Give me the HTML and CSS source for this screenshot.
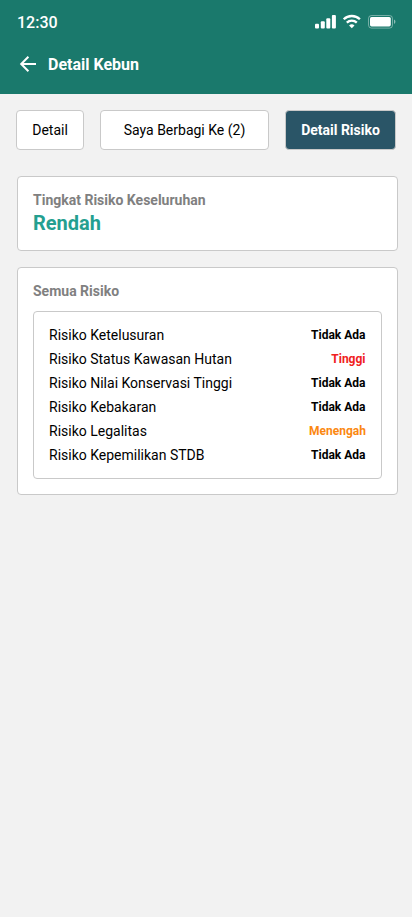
FILE: index.html
```html
<!DOCTYPE html>
<html lang="id">
<head>
<meta charset="utf-8">
<meta name="viewport" content="width=device-width, initial-scale=1">
<title>Detail Kebun</title>
<link rel="stylesheet" href="styles.css">
</head>
<body>
<header class="header">
  <div class="status-bar">
    <time class="clock">12:30</time>
    <svg class="status-icons" width="82" height="16" viewBox="0 0 82 16" fill="#fff" aria-hidden="true">
      <rect x="1" y="9.8" width="4" height="4.8" rx="1"/>
      <rect x="6.8" y="7.2" width="4" height="7.4" rx="1"/>
      <rect x="12.3" y="4.2" width="4" height="10.4" rx="1"/>
      <rect x="17.9" y="1" width="4" height="13.6" rx="1"/>
      <g fill="none" stroke="#fff" stroke-width="2.3">
        <path d="M29.7 5.3a11.6 11.6 0 0 1 16.2 0"/>
        <path d="M32.8 8.7a7.2 7.2 0 0 1 10 0"/>
      </g>
      <path d="M37.8 14.2l-2.7-2.7a4 4 0 0 1 5.4 0z"/>
      <rect x="54.5" y="1.5" width="24" height="12.6" rx="3" fill="none" stroke="#fff" stroke-opacity=".4"/>
      <rect x="56" y="3" width="20.8" height="9.4" rx="1.6"/>
      <path d="M80 5.6v4.4a2.4 2.4 0 0 0 0-4.4z" opacity=".5"/>
    </svg>
  </div>
  <div class="title-bar">
    <svg width="18" height="18" viewBox="0 0 18 18" fill="none" stroke="#fff" stroke-width="2" aria-hidden="true">
      <path d="M17 9H2.8M9.4 1.8L2.2 9l7.2 7.2"/>
    </svg>
    <h1 class="title">Detail Kebun</h1>
  </div>
</header>
<main>
  <nav class="tabs">
    <a class="tab">Detail</a>
    <a class="tab tab-wide">Saya Berbagi Ke (2)</a>
    <a class="tab tab-active">Detail Risiko</a>
  </nav>
  <section class="card card-summary">
    <h2 class="card-title">Tingkat Risiko Keseluruhan</h2>
    <p class="level">Rendah</p>
  </section>
  <section class="card card-risks">
    <h2 class="card-title">Semua Risiko</h2>
    <dl class="risks">
      <div class="risk"><dt>Risiko Ketelusuran</dt><dd>Tidak Ada</dd></div>
      <div class="risk"><dt>Risiko Status Kawasan Hutan</dt><dd class="high">Tinggi</dd></div>
      <div class="risk"><dt>Risiko Nilai Konservasi Tinggi</dt><dd>Tidak Ada</dd></div>
      <div class="risk"><dt>Risiko Kebakaran</dt><dd>Tidak Ada</dd></div>
      <div class="risk"><dt>Risiko Legalitas</dt><dd class="medium">Menengah</dd></div>
      <div class="risk"><dt>Risiko Kepemilikan STDB</dt><dd>Tidak Ada</dd></div>
    </dl>
  </section>
</main>
</body>
</html>
```
FILE: styles.css
```css
* { box-sizing: border-box; margin: 0; padding: 0; }

body {
  min-height: 917px;
  background: #f2f2f2;
  color: #000;
  font-family: Roboto, sans-serif;
  font-size: 14px;
  line-height: 24px;
}

.header { height: 94px; background: #1a796c; color: #fff; }

.status-bar {
  display: flex;
  justify-content: space-between;
  align-items: center;
  height: 44px;
  padding: 0 16px 0 17px;
}

.clock { padding-top: 1px; font-size: 16px; font-weight: 500; }

.title-bar {
  display: flex;
  align-items: center;
  gap: 11px;
  height: 40px;
  padding-left: 19px;
}

.title { padding-top: 2px; font-size: 16px; font-weight: 700; line-height: 24px; }

.tabs { display: flex; gap: 16px; padding: 16px 16px 26px; }

.tab {
  display: flex;
  justify-content: center;
  align-items: center;
  width: 68px;
  height: 40px;
  border: 1px solid #c9c9c9;
  border-radius: 4px;
  background: #fff;
}

.tab-wide { width: 169px; }

.tab-active { width: 111px; background: #2a5567; color: #fff; font-weight: 700; }

.card {
  width: 381px;
  margin: 0 0 16px 17px;
  padding: 11px 15px 15px;
  border: 1px solid #c9c9c9;
  border-radius: 4px;
  background: #fff;
}

.card-summary { height: 75px; }

.card-risks { height: 228px; }

.card-title { color: #808080; font-size: 14px; font-weight: 700; line-height: 24px; }

.level { color: #249f90; font-size: 20px; font-weight: 700; line-height: 22px; }

.risks {
  height: 168px;
  margin-top: 8px;
  padding: 11px 15px;
  border: 1px solid #c9c9c9;
  border-radius: 4px;
}

.risk { display: flex; justify-content: space-between; height: 24px; }

.risk dd { padding-right: 0.5px; font-size: 12px; font-weight: 700; }

.risk .high { color: #f02020; }

.risk .medium { padding-right: 0; color: #fb8811; }
```
